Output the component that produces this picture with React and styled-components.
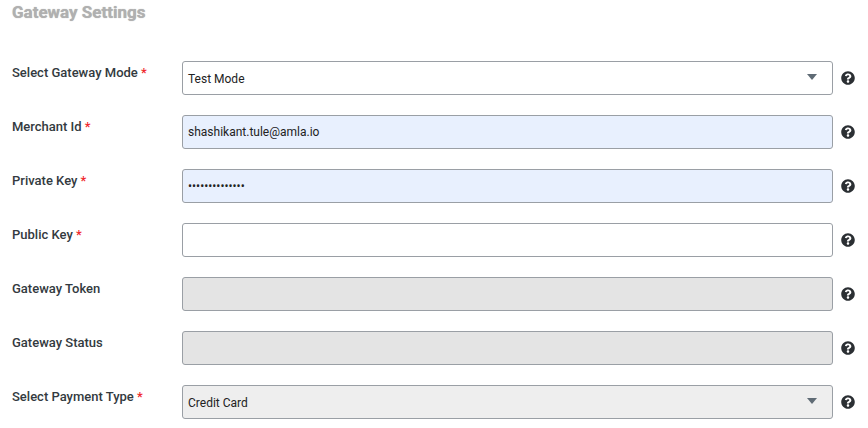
import React from "react"
import styled, { createGlobalStyle } from "styled-components"
import { FaQuestionCircle } from "react-icons/fa"

const GlobalStyle = createGlobalStyle`
  html, body {
    margin: 0;
    padding: 0;
    background: #fff;
    overflow: hidden;
  }
  body {
    font-family: Roboto, "Liberation Sans", sans-serif;
  }
`
const Page = styled.div`
  width: 868px;
  height: 428px;
  padding: 4px 13px 0 12px;
  box-sizing: border-box;
`
const Title = styled.h2`
  margin: 0 0 40px;
  height: 17px;
  font-size: 17px;
  line-height: 17px;
  font-weight: 700;
  color: #b0b0b0;
  text-shadow: 0 0 1px #b0b0b0;
`
const Form = styled.div`
  display: flex;
  flex-direction: column;
  gap: 20px;
`
const Row = styled.div`
  display: flex;
  align-items: flex-start;
  height: 34px;
`
const Label = styled.label`
  width: 170px;
  flex: none;
  padding-top: 4px;
  font-size: 13px;
  line-height: 16px;
  font-weight: 500;
  color: #333a40;
`
const Star = styled.span`
  color: #f0282d;
`
const fieldBackgrounds = {
  plain: "#fff",
  filled: "#e8f0fe",
  disabled: "#e4e4e4",
  muted: "#eeeeee",
}
const Input = styled.input`
  width: 651px;
  height: 34px;
  box-sizing: border-box;
  padding: 0 5px;
  border: 1px solid #9a9fa5;
  border-radius: 3px;
  outline: none;
  font-family: inherit;
  font-size: 12px;
  color: #222;
  background: ${({ $tone }) => fieldBackgrounds[$tone]};
`
const Select = styled.div`
  width: 651px;
  height: 34px;
  box-sizing: border-box;
  display: flex;
  align-items: center;
  justify-content: space-between;
  padding: 2px 15px 0 5px;
  border: 1px solid #9a9fa5;
  border-radius: 3px;
  font-size: 12px;
  color: #222;
  background: ${({ $tone }) => fieldBackgrounds[$tone]};
`
const Caret = styled.span`
  width: 0;
  height: 0;
  margin-top: -4px;
  border-left: 5px solid transparent;
  border-right: 5px solid transparent;
  border-top: 6px solid #5f6b75;
`
const Help = styled.span`
  display: flex;
  margin: 10px 0 0 8px;
  font-size: 14px;
  color: #2b2f33;
`

const Field = ({ label, required, children }) => (
  <Row>
    <Label>
      {label}
      {required && <Star> *</Star>}
    </Label>
    {children}
    <Help>
      <FaQuestionCircle />
    </Help>
  </Row>
)

const App = () => (
  <Page>
    <GlobalStyle />
    <Title>Gateway Settings</Title>
    <Form>
      <Field label="Select Gateway Mode" required>
        <Select $tone="plain">
          Test Mode
          <Caret />
        </Select>
      </Field>
      <Field label="Merchant Id" required>
        <Input $tone="filled" readOnly value="shashikant.tule@amla.io" />
      </Field>
      <Field label="Private Key" required>
        <Input $tone="filled" readOnly type="password" value="12345678901234" />
      </Field>
      <Field label="Public Key" required>
        <Input $tone="plain" readOnly value="" />
      </Field>
      <Field label="Gateway Token">
        <Input $tone="disabled" readOnly value="" />
      </Field>
      <Field label="Gateway Status">
        <Input $tone="disabled" readOnly value="" />
      </Field>
      <Field label="Select Payment Type" required>
        <Select $tone="muted">
          Credit Card
          <Caret />
        </Select>
      </Field>
    </Form>
  </Page>
)

export default App
